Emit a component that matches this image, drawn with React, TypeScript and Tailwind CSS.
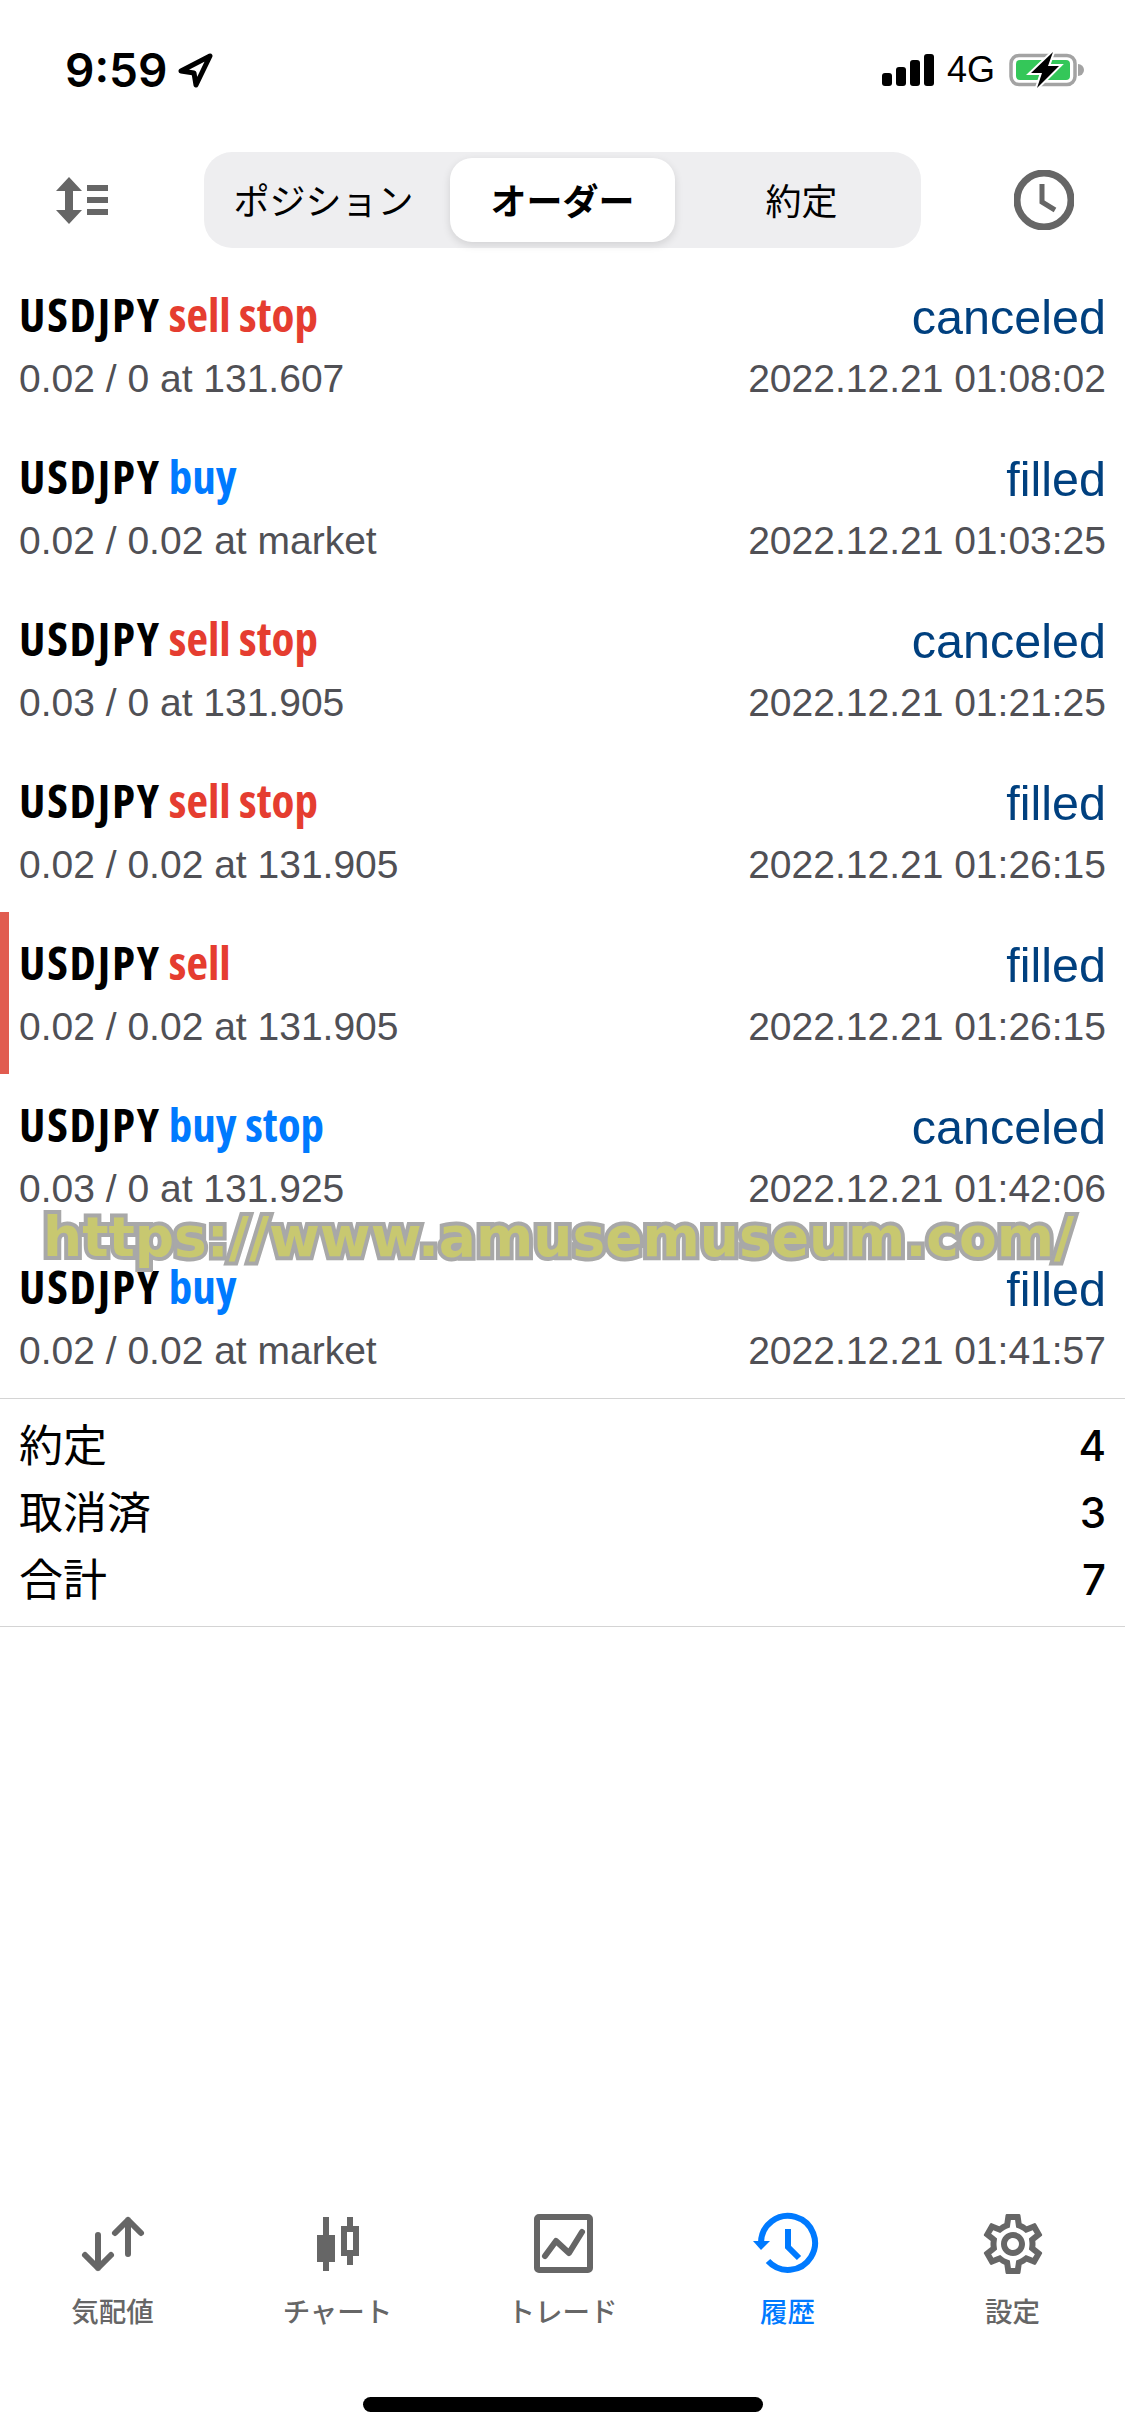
import { MdOutlineSettings } from 'react-icons/md'

const orders = [
  { type: 'sell stop', side: 'sell', status: 'canceled', detail: '0.02 / 0 at 131.607', time: '2022.12.21 01:08:02' },
  { type: 'buy', side: 'buy', status: 'filled', detail: '0.02 / 0.02 at market', time: '2022.12.21 01:03:25' },
  { type: 'sell stop', side: 'sell', status: 'canceled', detail: '0.03 / 0 at 131.905', time: '2022.12.21 01:21:25' },
  { type: 'sell stop', side: 'sell', status: 'filled', detail: '0.02 / 0.02 at 131.905', time: '2022.12.21 01:26:15' },
  { type: 'sell', side: 'sell', status: 'filled', detail: '0.02 / 0.02 at 131.905', time: '2022.12.21 01:26:15', marked: true },
  { type: 'buy stop', side: 'buy', status: 'canceled', detail: '0.03 / 0 at 131.925', time: '2022.12.21 01:42:06' },
  { type: 'buy', side: 'buy', status: 'filled', detail: '0.02 / 0.02 at market', time: '2022.12.21 01:41:57' },
]

const totals = [
  { label: '約定', value: 4 },
  { label: '取消済', value: 3 },
  { label: '合計', value: 7 },
]

function StatusBar() {
  return (
    <div className="flex items-center h-[40px] mt-[50px] pl-[65px] pr-[40px] text-black">
      <span className="font-['Inter',sans-serif] font-semibold text-[46px] leading-[40px]">9:59</span>
      <svg viewBox="177 52 36 35" className="w-[36px] h-[35px] ml-[11px]" fill="none" stroke="#000" strokeWidth="5" strokeLinejoin="round">
        <path d="M180 70 L209 55 L195 84 L193 72 Z" />
      </svg>
      <svg viewBox="882 53 52 32" className="w-[52px] h-[32px] ml-auto" fill="#000">
        <rect x="882" y="72" width="10" height="13" rx="3" />
        <rect x="896" y="66" width="10" height="19" rx="3" />
        <rect x="910" y="59" width="10" height="26" rx="3" />
        <rect x="924" y="53" width="10" height="32" rx="3" />
      </svg>
      <span className="font-['Liberation_Sans',sans-serif] text-[36px] leading-[40px] ml-[13px]">4G</span>
      <svg viewBox="1009 50 76 38" className="w-[76px] h-[38px] ml-[14px]">
        <rect x="1011" y="54.5" width="64" height="29" rx="8" fill="none" stroke="#a3a3a3" strokeWidth="3.5" />
        <rect x="1016" y="59" width="54" height="20" rx="4" fill="#34c759" />
        <path d="M1078 63 a6 6 0 0 1 0 12 Z" fill="#a3a3a3" />
        <path d="M1053 51 L1031 72 L1042 72 L1037 87 L1059 65 L1048 65 Z" fill="#000" stroke="#fff" strokeWidth="4" paintOrder="stroke" />
      </svg>
    </div>
  )
}

function Header() {
  return (
    <div className="flex items-center h-[96px] mt-[62px]">
      <svg viewBox="56 174 54 47" className="w-[54px] h-[47px] ml-[56px]" fill="#666">
        <path d="M69 174 L82 188 L73 188 L73 207 L82 207 L69 221 L56 207 L65 207 L65 188 L56 188 Z" />
        <rect x="87" y="182" width="21" height="6" />
        <rect x="87" y="194" width="21" height="6" />
        <rect x="87" y="206" width="21" height="6" />
      </svg>
      <div className="grid grid-cols-3 w-[717px] h-[96px] ml-[94px] py-[6px] rounded-[28px] bg-[#eeeef0] font-['Noto_Sans_CJK_JP',sans-serif] text-[36px] leading-[82px] text-black">
        <div className="text-center">ポジション</div>
        <div className="text-center mx-[7px] rounded-[22px] bg-white font-bold shadow-[0_3px_8px_rgba(0,0,0,0.12)]">オーダー</div>
        <div className="text-center">約定</div>
      </div>
      <svg viewBox="1019 167 60 60" className="w-[60px] h-[60px] ml-[93px]" fill="none" stroke="#666">
        <circle cx="1049" cy="197" r="27" strokeWidth="7" />
        <path d="M1047 181 V199 L1060 207" strokeWidth="5" />
      </svg>
    </div>
  )
}

function OrderRow({ order }: { order: (typeof orders)[number] }) {
  return (
    <div className={`flex justify-between h-[162px] pt-[20px] pr-[19px] ${order.marked ? 'border-l-[9px] border-[#e15c50] pl-[10px]' : 'pl-[19px]'}`}>
      <div>
        <div className="h-[60px] leading-[60px] text-[47px] font-bold font-['Open_Sans',sans-serif] font-stretch-condensed text-black whitespace-nowrap">
          <span className="tracking-[1.8px]">USDJPY</span>
          <span className={`ml-[8px] ${order.side === 'sell' ? 'text-[#e53d30]' : 'text-[#007aff]'}`}>{order.type}</span>
        </div>
        <div className="h-[60px] mt-[5px] leading-[60px] text-[39px] font-['Liberation_Sans',sans-serif] text-[#505055]">{order.detail}</div>
      </div>
      <div className="text-right font-['Liberation_Sans',sans-serif]">
        <div className="h-[60px] leading-[66px] text-[48.5px] text-[#00407f]">{order.status}</div>
        <div className="h-[60px] mt-[5px] leading-[60px] text-[39px] text-[#505055]">{order.time}</div>
      </div>
    </div>
  )
}

function Tab({ label, active, children }: { label: string; active?: boolean; children: React.ReactNode }) {
  return (
    <div className="flex flex-col items-center">
      {children}
      <div className={`mt-[20px] h-[30px] leading-[28px] text-[27.5px] font-medium font-['Noto_Sans_CJK_JP',sans-serif] ${active ? 'text-[#007aff]' : 'text-[#666]'}`}>
        {label}
      </div>
    </div>
  )
}

export default function App() {
  return (
    <div className="relative flex flex-col w-[1125px] h-[2436px] bg-white overflow-hidden">
      <StatusBar />
      <Header />

      <div className="mt-[16px]">
        {orders.map((order, i) => (
          <OrderRow key={i} order={order} />
        ))}
      </div>

      <div className="border-y border-[#d4d4d4] py-[13px] px-[19px]">
        {totals.map((t) => (
          <div key={t.label} className="flex justify-between h-[67px] text-[44px] text-black">
            <span className="leading-[62px] font-['Noto_Sans_CJK_JP',sans-serif]">{t.label}</span>
            <span className="leading-[68px] font-['Inter',sans-serif] font-medium text-[42px]">{t.value}</span>
          </div>
        ))}
      </div>

      <div className="mt-auto grid grid-cols-5">
        <Tab label="気配値">
          <svg viewBox="77 2212 70 64" className="w-[70px] h-[64px]" fill="none" stroke="#666" strokeWidth="6" strokeLinecap="round" strokeLinejoin="round">
            <path d="M127 2254 V2220 M114 2233 L127 2220 L140 2233" />
            <path d="M97 2235 V2268 M84 2255 L97 2268 L110 2255" />
          </svg>
        </Tab>
        <Tab label="チャート">
          <svg viewBox="302 2212 70 64" className="w-[70px] h-[64px]" fill="#666">
            <rect x="322" y="2217" width="6" height="54" />
            <rect x="316" y="2235" width="18" height="27" />
            <rect x="346" y="2217" width="6" height="9" />
            <rect x="346" y="2256" width="6" height="9" />
            <path fillRule="evenodd" d="M340 2226 H358 V2256 H340 Z M346 2232 V2250 H352 V2232 Z" />
          </svg>
        </Tab>
        <Tab label="トレード">
          <svg viewBox="527 2212 70 64" className="w-[70px] h-[64px]" fill="none" stroke="#666" strokeWidth="6" strokeLinecap="round" strokeLinejoin="round">
            <rect x="536" y="2217" width="53" height="53" rx="2" />
            <path d="M544 2256 L555 2241 L568 2253 L581 2232" />
          </svg>
        </Tab>
        <Tab label="履歴" active>
          <svg viewBox="752 2212 70 64" className="w-[70px] h-[64px]" fill="none" stroke="#007aff" strokeWidth="6">
            <path d="M760 2243 A27 27 0 1 1 767 2261" />
            <path d="M752 2241 H769 L760 2250 Z" fill="#007aff" stroke="none" />
            <path d="M787 2229 V2247 L798 2258" />
          </svg>
        </Tab>
        <Tab label="設定">
          <div className="flex items-center justify-center w-[70px] h-[64px]">
            <MdOutlineSettings className="shrink-0 w-[72px] h-[72px] text-[#666]" />
          </div>
        </Tab>
      </div>

      <div className="self-center w-[400px] h-[15px] mt-[71px] mb-[24px] rounded-full bg-black" />

      {/* site watermark stamped over the list */}
      <div className="absolute left-[43px] top-[1204px] whitespace-nowrap font-['DejaVu_Sans',sans-serif] font-bold text-[55px] leading-[66px] text-[#c8c870] [-webkit-text-stroke:8px_#a8a8a8] [paint-order:stroke_fill]">
        https://www.amusemuseum.com/
      </div>
    </div>
  )
}
